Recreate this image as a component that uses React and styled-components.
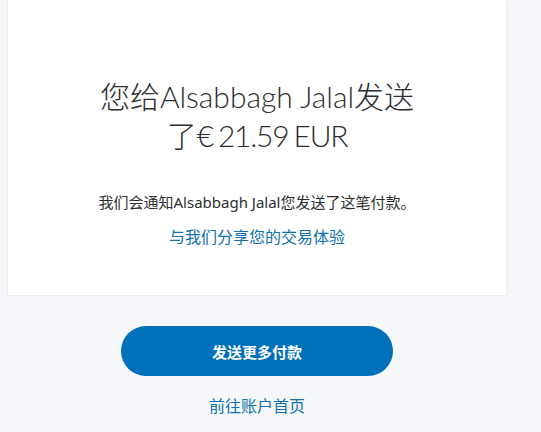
import { createGlobalStyle, styled } from 'styled-components'

const GlobalStyle = createGlobalStyle`
  html, body {
    margin: 0;
    padding: 0;
    background: #f5f7fa;
  }
  body {
    font-family: "Noto Sans", "Noto Sans CJK SC", sans-serif;
    color: #2c2e2f;
  }
`

const App = () => {
  return (
    <Page>
      <GlobalStyle />
      <Card>
        <Heading>
          您给Alsabbagh Jalal发送<br />了<Amount>€ 21.59 EUR</Amount>
        </Heading>
        <Notice>我们会通知Alsabbagh Jalal您发送了这笔付款。</Notice>
        <LinkText>与我们分享您的交易体验</LinkText>
      </Card>
      <Actions>
        <PrimaryButton>发送更多付款</PrimaryButton>
        <LinkText>前往账户首页</LinkText>
      </Actions>
    </Page>
  )
}

const Page = styled.main`
  width: 498px;
  padding: 0 8px;
  display: flex;
  flex-direction: column;
`

const Card = styled.section`
  background: #ffffff;
  box-shadow: 0 0 0 1px #eceef2, 1px 1px 3px rgba(0, 0, 0, 0.04);
  padding: 77px 24px 47px;
  display: flex;
  flex-direction: column;
  align-items: center;
  text-align: center;
`

const Heading = styled.h1`
  margin: 0;
  font-family: "Lato", "Noto Sans CJK SC", sans-serif;
  font-weight: 300;
  font-size: 30px;
  line-height: 39px;
  color: #2c2e2f;
`

const Amount = styled.span`
  letter-spacing: -1.2px;
  word-spacing: -2px;
`

const Notice = styled.p`
  margin: 37px 0 0;
  font-size: 15px;
  line-height: 20px;
  color: #2c2e2f;
`

const LinkText = styled.a`
  display: block;
  margin-top: 14px;
  font-size: 16px;
  line-height: 22px;
  color: #1072ad;
  cursor: pointer;
`

const Actions = styled.div`
  display: flex;
  flex-direction: column;
  align-items: center;
  padding-top: 31px;

  & > a {
    margin-top: 19px;
  }
`

const PrimaryButton = styled.button`
  width: 272px;
  height: 50px;
  border: none;
  border-radius: 25px;
  background: #0070ba;
  color: #ffffff;
  font-family: "Noto Sans", "Noto Sans CJK SC", sans-serif;
  font-size: 15px;
  font-weight: 700;
  cursor: pointer;
`

export default App
